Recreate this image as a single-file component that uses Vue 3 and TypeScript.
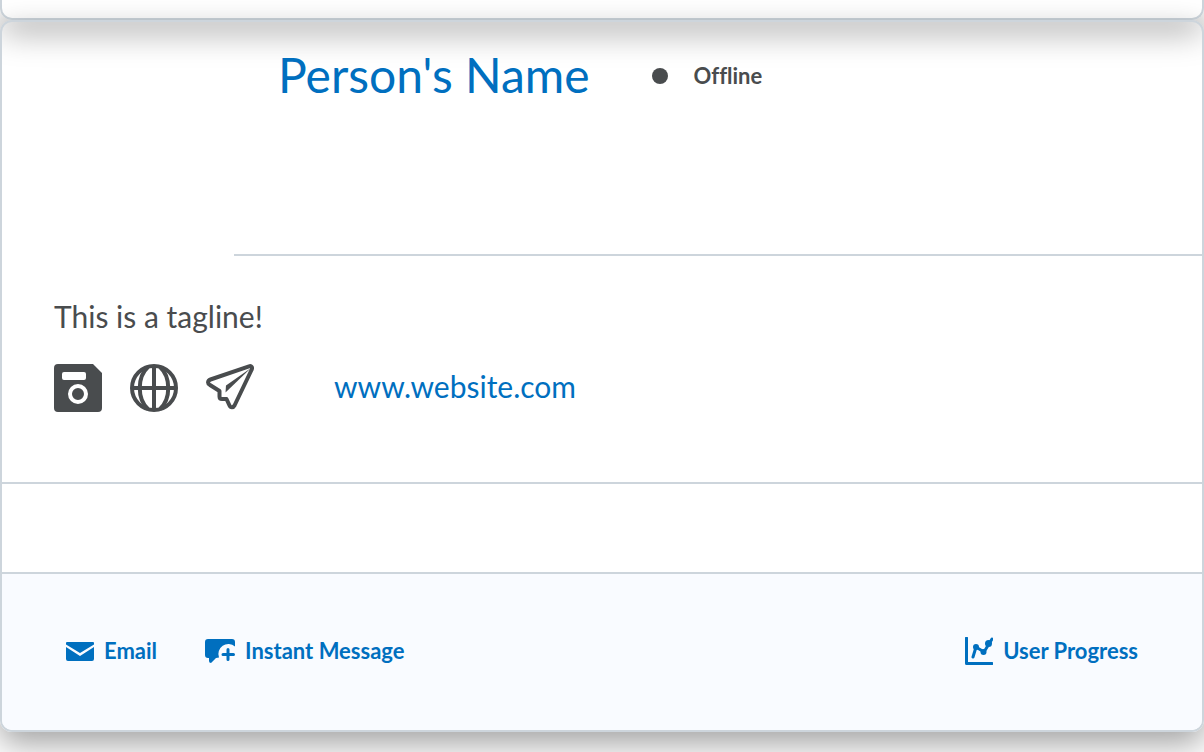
<script setup lang="ts">
interface Action {
  id: 'email' | 'message'
  label: string
}

const name = "Person's Name"
const status = 'Offline'
const tagline = 'This is a tagline!'
const website = 'www.website.com'
const actions: Action[] = [
  { id: 'email', label: 'Email' },
  { id: 'message', label: 'Instant Message' },
]
</script>

<template>
  <main class="page">
    <section class="card previous" aria-hidden="true"></section>

    <article class="card profile">
      <header class="header">
        <h1 class="name"><a href="#profile">{{ name }}</a></h1>
        <p class="status"><span class="dot"></span>{{ status }}</p>
      </header>

      <section class="about">
        <p class="tagline">{{ tagline }}</p>
        <div class="links">
          <button type="button" class="social" aria-label="Save">
            <svg viewBox="0 0 48 48" width="48" height="48">
              <path fill-rule="evenodd" d="M4 0H39L48 9V44a4 4 0 0 1-4 4H4a4 4 0 0 1-4-4V4a4 4 0 0 1 4-4ZM10 8a2 2 0 0 0-2 2v4a2 2 0 0 0 2 2h20a2 2 0 0 0 2-2v-4a2 2 0 0 0-2-2ZM24 20a10 10 0 1 0 0 20a10 10 0 1 0 0-20ZM24 24a6 6 0 1 1 0 12a6 6 0 1 1 0-12Z" />
            </svg>
          </button>
          <button type="button" class="social" aria-label="Web">
            <svg viewBox="0 0 48 48" width="48" height="48">
              <g fill="none" stroke="currentColor" stroke-width="4">
                <circle cx="24" cy="24" r="22" />
                <path d="M24 2V46M2 24H46M18 3C7 13 7 35 18 45M30 3C41 13 41 35 30 45" />
              </g>
            </svg>
          </button>
          <button type="button" class="social" aria-label="Send">
            <svg viewBox="0 0 48 48" width="48" height="48">
              <path d="M43 2.300L4.500 15.500C1.500 16.600 1.200 19.500 4 21L13.500 27V32.500Q13.500 35 16 35H20.500L23.500 41.500C24.500 43.800 27.300 43.800 28.500 41.500L45.500 6C46.800 3.500 45.500 1.500 43 2.300Z" fill="none" stroke="currentColor" stroke-width="4" stroke-linejoin="round" />
              <path d="M45 4L20 21.500L19.500 28.500Z" />
            </svg>
          </button>
          <a class="website" href="#website">{{ website }}</a>
        </div>
      </section>

      <div class="spacer"></div>

      <footer class="footer">
        <button v-for="action in actions" :key="action.id" type="button" class="action">
          <svg v-if="action.id === 'email'" viewBox="0 0 28 20" width="28" height="20">
            <path d="M1 1H27Q28 1 28 2V3.500L14 12L0 3.500V2Q0 1 1 1ZM0 6L14 15L28 6V18Q28 20 26 20H2Q0 20 0 18Z" />
          </svg>
          <svg v-else viewBox="0 0 30 24" width="30" height="24">
            <path d="M3 0H27a3 3 0 0 1 3 3V7.500A10 10 0 0 0 14 18.500L11 19L6 24Q4 24 4 22V19H3a3 3 0 0 1-3-3V3a3 3 0 0 1 3-3Z" />
            <path d="M23 10.500V20.500M18 15.500H28.500" fill="none" stroke="currentColor" stroke-width="3" stroke-linecap="round" />
          </svg>
          <span>{{ action.label }}</span>
        </button>
        <button type="button" class="action progress">
          <svg viewBox="0 0 28 28" width="28" height="28">
            <path d="M1.500 1V26.500H27" fill="none" stroke="currentColor" stroke-width="3" stroke-linecap="round" stroke-linejoin="round" />
            <path d="M8 20L11 10L19 15L27 2" fill="none" stroke="currentColor" stroke-width="3" stroke-linecap="round" />
            <circle cx="11" cy="10" r="3" /><circle cx="18.500" cy="15" r="3" /><circle cx="23.500" cy="6.500" r="3.500" />
          </svg>
          <span>User Progress</span>
        </button>
      </footer>
    </article>
  </main>
</template>

<style>
body {
  margin: 0;
  background: #fff;
}
</style>

<style scoped>
.page {
  font-family: Lato, sans-serif;
  font-variant-ligatures: none;
  color: #494c4e;
  overflow: hidden;
  padding-bottom: 20px;
}

.card {
  box-sizing: border-box;
  border: 2px solid #cdd5dc;
  border-radius: 12px;
  box-shadow: 0 12px 32px rgba(0, 0, 0, 0.37);
  overflow: hidden;
}

.previous {
  height: 20px;
  border-top: 0;
  border-top-left-radius: 0;
  border-top-right-radius: 0;
}

.header {
  display: flex;
  align-items: flex-start;
  height: 234px;
  box-sizing: border-box;
  padding: 24px 24px 0 44px;
  margin-left: 232px;
  border-bottom: 2px solid #cdd5dc;
}

.name {
  margin: 0;
  font-size: 48px;
  line-height: 58px;
  font-weight: 400;
}

a {
  color: #006fbf;
  text-decoration: none;
}

.status {
  display: flex;
  align-items: center;
  gap: 26px;
  margin: 0 0 0 62px;
  font-size: 22px;
  line-height: 60px;
  font-weight: 700;
}

.dot {
  width: 16px;
  height: 16px;
  border-radius: 50%;
  background: currentColor;
}

.about {
  padding: 42px 52px 70px;
  border-bottom: 2px solid #cdd5dc;
}

.tagline {
  margin: 0 0 30px;
  font-size: 30px;
  line-height: 36px;
}

.links {
  display: flex;
  align-items: flex-start;
  gap: 28px;
}

button {
  display: flex;
  padding: 0;
  border: 0;
  background: none;
  color: inherit;
  font: inherit;
  cursor: pointer;
}

svg {
  display: block;
  fill: currentColor;
}

.website {
  margin-left: 52px;
  font-size: 30px;
  line-height: 44px;
}

.spacer {
  height: 88px;
}

.footer {
  display: flex;
  align-items: center;
  gap: 48px;
  height: 154px;
  padding: 0 64px 2px;
  border-top: 2px solid #cdd5dc;
  background: #f9fbff;
}

.action {
  align-items: center;
  gap: 10px;
  color: #006fbf;
  font-size: 22px;
  line-height: 28px;
  font-weight: 700;
}

.progress {
  margin-left: auto;
}
</style>
